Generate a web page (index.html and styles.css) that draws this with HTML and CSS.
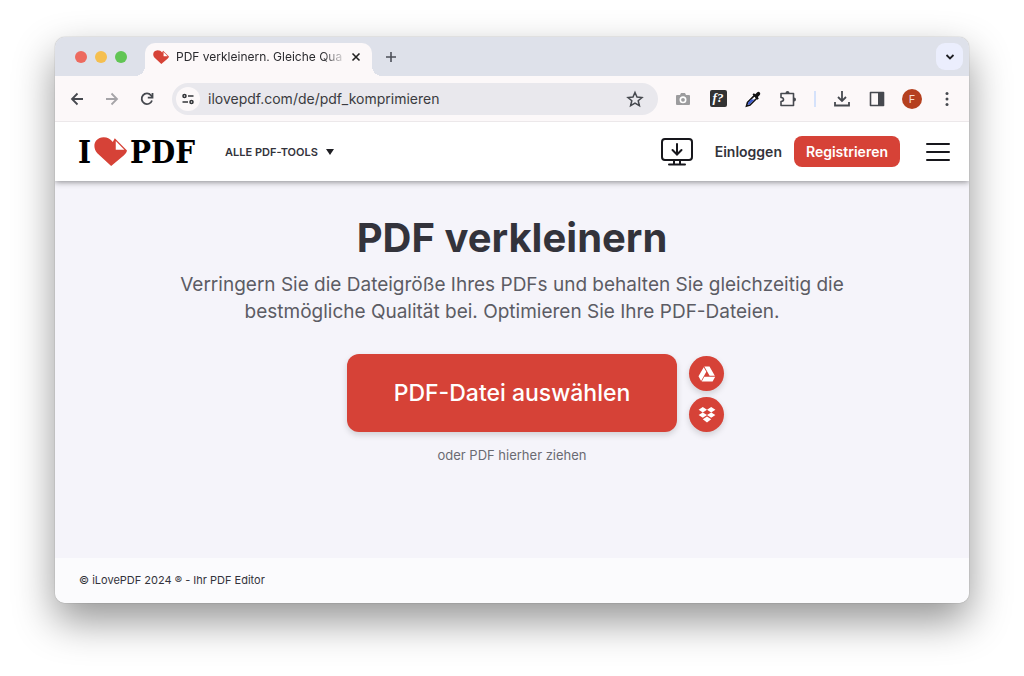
FILE: index.html
```html
<!DOCTYPE html>
<html lang="de">
<head>
  <meta charset="UTF-8">
  <meta name="viewport" content="width=device-width, initial-scale=1.0">
  <title>PDF verkleinern. Gleiche Qualität</title>
  <link rel="stylesheet" href="styles.css">
</head>
<body>
  <svg class="sprite" aria-hidden="true">
    <symbol id="heart" viewBox="0 0 100 88">
      <path fill="#d64237" d="M52 88 10 49C-7 30 1 2 29 1c12 0 21 5 28 14l6-11 37 37c-1 6-4 10-9 14z"/>
      <path fill="#fff" d="M66 12v27h26z"/>
    </symbol>
  </svg>

  <div class="window">
    <!-- tabs -->
    <div class="tabs">
      <div class="lights">
        <span class="light red"></span>
        <span class="light yellow"></span>
        <span class="light green"></span>
      </div>
      <div class="tab">
        <svg class="favicon"><use href="#heart"/></svg>
        <span class="tab_title">PDF verkleinern. Gleiche Qua</span>
        <button class="close" aria-label="Tab schließen">
          <svg width="10" height="10" viewBox="0 0 10 10"><path d="M1.5 1.5l7 7m0-7l-7 7" stroke="#222" stroke-width="1.6"/></svg>
        </button>
      </div>
      <button class="new_tab" aria-label="Neuer Tab">
        <svg width="12" height="12" viewBox="0 0 12 12"><path d="M6 1v10M1 6h10" stroke="#4c4f58" stroke-width="1.6"/></svg>
      </button>
      <button class="tab_search" aria-label="Tabs suchen">
        <svg width="10" height="8" viewBox="0 0 10 8"><path d="M1.5 2L5 5.5 8.500 2" fill="none" stroke="#1f2024" stroke-width="1.8"/></svg>
      </button>
    </div>

    <!-- toolbar -->
    <div class="toolbar">
      <button class="tool" aria-label="Zurück">
        <svg viewBox="0 0 20 20" fill="none" stroke="#46494f" stroke-width="1.8"><path d="M16 10H5m5.500-5.500L5 10l5.500 5.500"/></svg>
      </button>
      <button class="tool" aria-label="Vorwärts">
        <svg viewBox="0 0 20 20" fill="none" stroke="#a5a4a8" stroke-width="1.8"><path d="M4 10h11M9.500 4.500L15 10l-5.500 5.500"/></svg>
      </button>
      <button class="tool" aria-label="Neu laden">
        <svg viewBox="0 0 20 20" fill="none" stroke="#46494f" stroke-width="1.8"><path d="M15 11.500A5.300 5.300 0 1 1 14 6.300L15.500 8"/><path d="M15.500 4v4.700h-4.700"/></svg>
      </button>
      <div class="address">
        <button class="site_info" aria-label="Websiteinformationen">
          <svg width="14" height="12" viewBox="0 0 14 12" fill="none" stroke="#333539" stroke-width="1.6"><circle cx="3.500" cy="3" r="1.500"/><path d="M7 3h5.500M1.500 9H7"/><circle cx="10.500" cy="9" r="1.500"/></svg>
        </button>
        <input type="text" class="url" value="ilovepdf.com/de/pdf_komprimieren" aria-label="Adresse">
        <button class="tool" aria-label="Lesezeichen">
          <svg viewBox="0 0 20 20" fill="none" stroke="#46494f" stroke-width="1.5"><path d="M10 3.500l2 4.600 5 .4-3.800 3.300 1.200 4.900L10 14.100l-4.400 2.600 1.200-4.900L3 8.500l5-.4z"/></svg>
        </button>
      </div>
      <button class="tool" aria-label="Screenshot">
        <svg viewBox="0 0 20 20"><path fill="#9c9c9e" d="M4 6h3l1-2h4l1 2h3q1 0 1 1v8q0 1-1 1H4q-1 0-1-1V7q0-1 1-1z"/><circle cx="10" cy="10.800" r="2.700" fill="#9c9c9e" stroke="#fff" stroke-width="1.6"/></svg>
      </button>
      <button class="tool font_tool" aria-label="Schriftart erkennen"><span>f?</span></button>
      <button class="tool" aria-label="Pipette">
        <svg viewBox="0 0 20 20"><path d="M11.500 6.500l2.500 2.500-7 7-3.500 1 1-3.500z" fill="#fff" stroke="#111" stroke-width="1.6"/><path d="M8 10.500h3.500l-4.800 4.700-2.200.8 1-2.700z" fill="#3d5bd0"/><path d="M9.500 5.500l1.300-1.300 1.500 1 2-2q1.500-1 2.500.3t0 2.400l-2 2 1 1.500-1.300 1.300z" fill="#111"/></svg>
      </button>
      <button class="tool" aria-label="Erweiterungen">
        <svg viewBox="0 0 20 20"><path fill="none" stroke="#46494f" stroke-width="1.6" stroke-linejoin="round" d="M3 4.500h12.500v12H3v-4q2.500-.2 2.500-2t-2.500-2z"/><path fill="#46494f" d="M7.500 4a2 2 0 0 1 4 0zM16 8.500a2 2 0 0 1 0 4z"/></svg>
      </button>
      <span class="divider"></span>
      <button class="tool" aria-label="Downloads">
        <svg viewBox="0 0 20 20" fill="none" stroke="#46494f" stroke-width="1.8"><path d="M10 2v9.500M6 8l4 4 4-4M3 13v3.500h14V13"/></svg>
      </button>
      <button class="tool" aria-label="Seitenleiste">
        <svg viewBox="0 0 20 20"><path d="M3.500 3.500h13v13h-13z" fill="none" stroke="#46494f" stroke-width="1.6" stroke-linejoin="round"/><path d="M11 4h5v12h-5z" fill="#46494f"/></svg>
      </button>
      <button class="tool avatar" aria-label="Profil">F</button>
      <button class="tool" aria-label="Menü">
        <svg viewBox="0 0 20 20" fill="#46494f"><circle cx="10" cy="4.500" r="1.500"/><circle cx="10" cy="10" r="1.500"/><circle cx="10" cy="15.500" r="1.500"/></svg>
      </button>
    </div>

    <!-- site header -->
    <header class="header">
      <a href="#" class="logo">I<svg class="logo_heart"><use href="#heart"/></svg>PDF</a>
      <a href="#" class="all_tools">ALLE PDF-TOOLS
        <svg width="8" height="6" viewBox="0 0 8 6"><path d="M0 0h8L4 6z" fill="#1f1f24"/></svg>
      </a>
      <a href="#" class="desktop" aria-label="Desktop-App">
        <svg width="32" height="30" viewBox="0 0 32 30" fill="none" stroke="#17171c" stroke-width="2"><rect x="1" y="2" width="30" height="21" rx="3"/><path d="M13 23v4m6-4v4" /><path d="M8 27.500h16M16 7v10M11.500 13l4.500 4.500 4.500-4.500" stroke-linecap="round"/></svg>
      </a>
      <a href="#" class="login">Einloggen</a>
      <a href="#" class="register">Registrieren</a>
      <button class="burger" aria-label="Navigation">
        <svg width="24" height="18" viewBox="0 0 24 18"><path d="M1 1h22M1 9h22M1 17h22" stroke="#17171c" stroke-width="2" stroke-linecap="round"/></svg>
      </button>
    </header>

    <main class="main">
      <h1>PDF verkleinern</h1>
      <p class="subtitle">Verringern Sie die Dateigröße Ihres PDFs und behalten Sie gleichzeitig die bestmögliche Qualität bei. Optimieren Sie Ihre PDF-Dateien.</p>
      <div class="uploader">
        <button class="pick">PDF-Datei auswählen</button>
        <div class="clouds">
          <button class="cloud" aria-label="Google Drive">
            <svg width="18" height="16" viewBox="0 0 18 16" fill="#fff"><path d="M6.300.500h5.200l5.300 9.300h-5.200zM5.700 1.200L.5 10.300 3.100 15 8.300 5.800zM6.300 10.700h10.900L14.600 15.500H3.700z"/></svg>
          </button>
          <button class="cloud" aria-label="Dropbox">
            <svg width="18" height="16" viewBox="0 0 18 16" fill="#fff"><path d="M4.800 0L9 2.700 4.800 5.400.6 2.700zM13.200 0l4.200 2.700-4.200 2.700L9 2.700zM4.800 5.400L9 8.100l-4.200 2.700L.6 8.100zM13.200 5.400l4.200 2.700-4.200 2.700L9 8.100zM9 9.500l4.200 2.700L9 15.500l-4.200-3.300z"/></svg>
          </button>
        </div>
      </div>
      <p class="hint">oder PDF hierher ziehen</p>
    </main>

    <footer class="footer">© iLovePDF 2024 ® - Ihr PDF Editor</footer>
  </div>
</body>
</html>
```
FILE: styles.css
```css
* {
  box-sizing: border-box;
  margin: 0;
}
body {
  min-height: 100vh;
  display: flex;
  padding: 37px 55px 73px;
  background: white;
  font-family: Inter, "Liberation Sans", sans-serif;
  color: #33333b;
}
button {
  border: none;
  padding: 0;
  background: none;
  font-family: inherit;
  color: inherit;
  display: flex;
  align-items: center;
  justify-content: center;
  flex-shrink: 0;
}
a {
  color: inherit;
  text-decoration: none;
}
.sprite {
  position: absolute;
  width: 0;
  height: 0;
}

.window {
  flex: 1;
  min-width: 0;
  display: flex;
  flex-direction: column;
  border-radius: 10px;
  overflow: hidden;
  box-shadow: 0 0 1px rgba(0, 0, 0, 0.5), 0 18px 40px rgba(0, 0, 0, 0.42);
}

/* tabs */
.tabs {
  height: 39px;
  display: flex;
  align-items: center;
  padding: 0 6px 0 20px;
  background: #dee1ea;
}
.lights {
  display: flex;
  gap: 8px;
  margin-right: 18px;
}
.light {
  width: 12px;
  height: 12px;
  border-radius: 50%;
}
.red {
  background: #ed6a5f;
}
.yellow {
  background: #f5bf4f;
}
.green {
  background: #61c554;
}
.tab {
  position: relative;
  align-self: flex-end;
  height: 33px;
  display: flex;
  align-items: center;
  padding: 0 10px 6px 8px;
  background: #fcf8f9;
  border-radius: 10px 10px 0 0;
}
/* curved feet of the active tab */
.tab::before, .tab::after {
  content: "";
  position: absolute;
  bottom: 0;
  width: 10px;
  height: 10px;
}
.tab::before {
  left: -10px;
  background: radial-gradient(circle at 0 0, transparent 10px, #fcf8f9 10px);
}
.tab::after {
  right: -10px;
  background: radial-gradient(circle at 100% 0, transparent 10px, #fcf8f9 10px);
}
.favicon {
  width: 16px;
  height: 14px;
  margin-right: 7px;
  flex-shrink: 0;
}
.tab_title {
  font-size: 12px;
  line-height: 16px;
  white-space: nowrap;
  color: #2a2a2e;
  mask-image: linear-gradient(to right, black 88%, rgba(0, 0, 0, 0.2));
}
.close {
  width: 12px;
  height: 16px;
  margin-left: 8px;
}
.new_tab {
  width: 28px;
  height: 28px;
  margin-left: 5px;
}
.tab_search {
  width: 27px;
  height: 27px;
  margin-left: auto;
  border-radius: 9px;
  background: #ebeefd;
}

/* toolbar */
.toolbar {
  position: relative;
  z-index: 1;
  height: 46px;
  display: flex;
  align-items: center;
  gap: 15px;
  padding: 0 12px;
  background: #fcf8f9;
  border-bottom: 1px solid #ece8ea;
}
.tool {
  width: 20px;
  height: 20px;
}
.tool svg {
  width: 20px;
  height: 20px;
}
.address {
  flex: 1;
  min-width: 0;
  height: 32px;
  display: flex;
  align-items: center;
  padding: 0 13px 0 4px;
  border-radius: 16px;
  background: #e9e8ed;
}
.site_info {
  width: 24px;
  height: 24px;
  border-radius: 50%;
  background: #fcf8f9;
}
.url {
  flex: 1;
  min-width: 0;
  border: none;
  outline: none;
  padding: 0 8px;
  background: none;
  font-family: inherit;
  font-size: 14px;
  color: #3a3b40;
}
.font_tool span {
  width: 17px;
  height: 17px;
  border-radius: 2px;
  background: #333;
  color: white;
  font: italic bold 13px/16px "Liberation Serif", serif;
}
.divider {
  width: 2px;
  height: 16px;
  margin: 0 1px;
  background: #d5e2fb;
}
.avatar {
  border-radius: 50%;
  background: #b5401f;
  color: #f6ddd4;
  font-size: 11px;
}

/* header */
.header {
  position: relative;
  height: 59px;
  display: flex;
  align-items: center;
  padding: 0 19px 0 23px;
  background: white;
  box-shadow: 0 1px 6px rgba(0, 0, 0, 0.45);
}
.logo {
  display: flex;
  align-items: center;
  font-family: "DejaVu Serif Condensed", "DejaVu Serif", serif;
  font-weight: bold;
  font-size: 31px;
  line-height: 36px;
  color: black;
}
.logo_heart {
  width: 33px;
  height: 29px;
  margin: 0 3px;
}
.all_tools {
  display: flex;
  align-items: center;
  gap: 8px;
  margin-left: 30px;
  font-size: 11px;
  font-weight: 600;
  white-space: nowrap;
}
.desktop {
  display: flex;
  margin-left: auto;
}
.login {
  margin: 0 12px 0 22px;
  font-size: 14px;
  font-weight: 600;
}
.register {
  padding: 0 12px;
  border-radius: 8px;
  background: #d64237;
  color: white;
  font-size: 14px;
  font-weight: 600;
  line-height: 31px;
}
.burger {
  margin-left: 26px;
}

/* content */
.main {
  flex: 1;
  display: flex;
  flex-direction: column;
  align-items: center;
  padding: 32px 24px;
  background: #f5f4fa;
}
h1 {
  font-size: 40px;
  font-weight: 700;
  line-height: 50px;
  text-align: center;
}
.subtitle {
  max-width: 720px;
  margin-top: 8px;
  font-size: 19px;
  line-height: 27px;
  text-align: center;
  color: #5c5c64;
}
.uploader {
  align-self: stretch;
  display: grid;
  grid-template-columns: 1fr auto 1fr;
  align-items: end;
  column-gap: 12px;
  margin-top: 29px;
}
.pick {
  grid-column: 2;
  height: 78px;
  padding: 0 47px;
  border-radius: 12px;
  background: #d64237;
  color: white;
  font-size: 23px;
  font-weight: 500;
  box-shadow: 0 3px 6px rgba(0, 0, 0, 0.15);
}
.clouds {
  display: flex;
  flex-direction: column;
  gap: 6px;
}
.cloud {
  width: 35px;
  height: 35px;
  border-radius: 50%;
  background: #d64237;
  box-shadow: 0 3px 6px rgba(0, 0, 0, 0.15);
}
.hint {
  margin-top: 13px;
  font-size: 13px;
  line-height: 20px;
  color: #6a6a72;
}
.footer {
  padding: 0 24px;
  background: #fbfbfd;
  font-size: 11px;
  line-height: 45px;
}
```
